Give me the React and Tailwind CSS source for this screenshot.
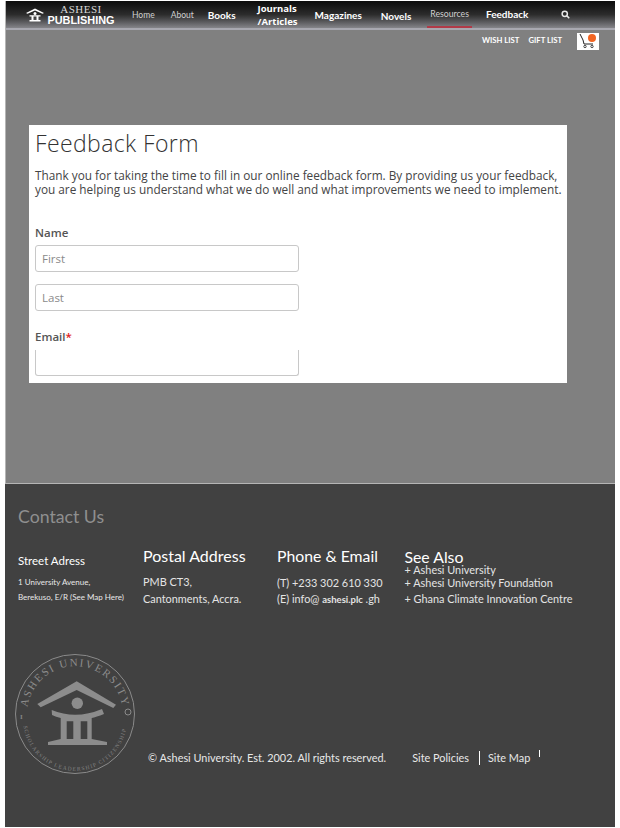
const NAV_ITEMS = [
  { label: 'Home', className: 'ml-[17px] text-[8.5px] text-[#d0d0d0] font-normal pt-[1px]' },
  { label: 'About', className: 'ml-[16px] text-[8.5px] text-[#d0d0d0] font-normal pt-[1px]' },
  { label: 'Books', className: 'ml-[14px] text-[10px] text-white font-bold pt-[1px]' },
  { label: 'Magazines', className: 'ml-[16px] text-[10px] text-white font-bold pt-[2px]' },
  { label: 'Novels', className: 'ml-[19px] text-[10px] text-white font-bold pt-[3px]' },
]

const Logo = () => (
  <svg width="20" height="16" viewBox="0 0 20 16" fill="none" className="ml-[19px] shrink-0">
    <path d="M1 6 L10 1.5 L19 6 L17.5 6.8 L10 3.4 L2.5 6.8 Z" fill="#fff" />
    <circle cx="10" cy="6.4" r="1.5" fill="#fff" />
    <path d="M4.5 8.2h11v1.2h-11z M6.5 9.4h2v3.6h-2z M11.5 9.4h2v3.6h-2z M4.5 13h11v1.4h-11z" fill="#fff" />
  </svg>
)

const Seal = () => (
  <svg width="122" height="122" viewBox="0 0 122 122" className="shrink-0">
    <defs>
      <path id="sealTop" d="M 13.5 53.3 A 48 48 0 0 1 108.5 53.3" />
      <path id="sealBottom" d="M 9.5 72 A 52 52 0 0 0 112.5 72" />
    </defs>
    <circle cx="61" cy="60" r="59.5" fill="none" stroke="#8a8a8a" strokeWidth="1" />
    <text fontSize="11" fill="#8d8d8d" fontFamily="'Liberation Serif', serif">
      <textPath href="#sealTop" textLength="135" lengthAdjust="spacing">ASHESI UNIVERSITY</textPath>
    </text>
    <text fontSize="5.5" fill="#858585" fontFamily="'Liberation Serif', serif">
      <textPath href="#sealBottom" textLength="145" lengthAdjust="spacing">SCHOLARSHIP LEADERSHIP CITIZENSHIP</textPath>
    </text>
    <text x="6" y="65" fontSize="7" fontWeight="700" fill="#858585" fontFamily="'Liberation Serif', serif">I</text>
    <circle cx="114" cy="58" r="3" fill="none" stroke="#8a8a8a" />
    <path d="M 23.3 50 L 62.7 27.3 L 102 50.7 L 99.3 54 L 62.7 36 L 26.7 53.3 Z" fill="#8c8c8c" />
    <circle cx="63.3" cy="49.3" r="5.7" fill="#8c8c8c" />
    <path d="M 37.7 56 Q 62 66 88 55 L 90 60 Q 82 63 77.7 64 L 46.7 64 Q 42 63 38 61 Z" fill="#8c8c8c" />
    <path
      fillRule="evenodd"
      d="M 46.7 63 H 77.7 V 85 L 93 88 V 91 H 34 V 88 L 46.7 85 Z M 52.7 67.3 V 85 H 59.3 V 67.3 Z M 66.7 67.3 V 85 H 73.3 V 67.3 Z"
      fill="#8c8c8c"
    />
  </svg>
)

const App = () => {
  return (
    <div className="w-[620px] h-[828px] bg-white px-[5px] pt-[1px] font-['Lato',sans-serif]">
      <main className="h-[482px] bg-[#808080] border-l border-[#b5b5b5]">
        <header className="h-[29px] flex items-center border-b-2 border-[#a8a8b0] bg-gradient-to-b from-[#0c0c0c] via-[#2c2c2c] to-[#85858a]">
          <Logo />
          <div className="ml-[2px] w-[68px] flex flex-col items-center leading-none">
            <span className="text-[11px] text-[#d8d8d8] tracking-[0.5px] font-['Liberation_Serif',serif]">ASHESI</span>
            <span className="text-[10.9px] text-white font-bold font-['Liberation_Sans',sans-serif]">PUBLISHING</span>
          </div>
          {NAV_ITEMS.slice(0, 3).map((item) => (
            <a key={item.label} className={item.className}>{item.label}</a>
          ))}
          <a className="ml-[22px] w-[41px] text-[9.5px] leading-[13px] text-white font-bold font-['Open_Sans',sans-serif]">Journals<br />/Articles</a>
          {NAV_ITEMS.slice(3).map((item) => (
            <a key={item.label} className={item.className}>{item.label}</a>
          ))}
          <a className="ml-[16px] h-full px-[3px] flex items-center text-[8.7px] text-[#d0d0d0] border-b-2 border-[#b23a48]">Resources</a>
          <a className="ml-[14px] text-[10px] text-white font-bold">Feedback</a>
          <svg width="9" height="9" viewBox="0 0 24 24" fill="none" stroke="#e8e8e8" strokeWidth="4" className="ml-[33px]">
            <circle cx="10" cy="10" r="7" />
            <path d="M15 15l7 7" />
          </svg>
        </header>
        <div className="h-[20px] flex items-center justify-end">
          <a className="pt-[2px] text-[7.7px] font-bold text-white">WISH LIST</a>
          <a className="pt-[2px] ml-[9px] text-[7.7px] font-bold text-white">GIFT LIST</a>
          <div className="ml-[15px] mr-[16px] mt-[2px] w-[22px] h-[17px] bg-white flex items-center justify-center">
            <svg width="20" height="16" viewBox="0 0 20 16" fill="none">
              <path d="M2 1l3 6 1 4h9" stroke="#222" strokeWidth="1" />
              <circle cx="7" cy="13.5" r="1.2" stroke="#222" strokeWidth="0.8" />
              <circle cx="14" cy="13.5" r="1.2" stroke="#222" strokeWidth="0.8" />
              <circle cx="14" cy="5" r="4" fill="#f26522" />
            </svg>
          </div>
        </div>
        <section className="mt-[75px] ml-[23px] w-[538px] h-[258px] bg-white px-[6px] pt-[3px] font-['Open_Sans',sans-serif] text-[#444]">
          <h1 className="text-[23px] leading-[30px] font-light tracking-[0.4px] text-[#333]">Feedback Form</h1>
          <p className="mt-[10px] text-[11.8px] leading-[14px] text-[#444] whitespace-nowrap">
            Thank you for taking the time to fill in our online feedback form. By providing us your feedback,<br />
            you are helping us understand what we do well and what improvements we need to implement.
          </p>
          <label className="block mt-[29px] text-[11.5px] leading-[15px] font-semibold text-[#555]">Name</label>
          <input placeholder="First" className="block mt-[5px] w-[264px] h-[27px] px-[6px] text-[11.5px] border border-[#c8c8c8] rounded-[3px] placeholder:text-[#8a8a8a]" />
          <input placeholder="Last" className="block mt-[12px] w-[264px] h-[27px] px-[6px] text-[11.5px] border border-[#c8c8c8] rounded-[3px] placeholder:text-[#8a8a8a]" />
          <label className="block mt-[18px] text-[11.5px] leading-[15px] font-semibold text-[#555]">Email<span className="text-[#e02020]">*</span></label>
          <input className="block mt-[6px] w-[264px] h-[26px] px-[6px] text-[11.5px] border border-t-0 border-[#c8c8c8] rounded-b-[3px]" />
        </section>
      </main>
      <footer className="h-[344px] bg-[#414141] border-t border-[#b5b5b5] pt-[20px] text-white">
        <h2 className="ml-[13px] text-[17.7px] leading-[26px] text-[#8f8f8f]">Contact Us</h2>
        <div className="mt-[16px] flex items-start h-[62px]">
          <div className="ml-[13px] w-[125px] pt-[7px]">
            <h3 className="text-[11.5px] leading-[16px]">Street Adress</h3>
            <p className="mt-[6px] text-[8px] leading-[15px] text-[#e8e8e8] whitespace-nowrap">1 University Avenue,<br />Berekuso, E/R (See Map Here)</p>
          </div>
          <div className="w-[134px]">
            <h3 className="text-[16px] leading-[20px]">Postal Address</h3>
            <p className="mt-[7px] text-[10.9px] leading-[17px] text-[#e4e4e4]">PMB CT3,<br />Cantonments, Accra.</p>
          </div>
          <div className="w-[127.5px]">
            <h3 className="text-[15.8px] leading-[20px]">Phone &amp; Email</h3>
            <p className="mt-[9px] text-[10.9px] leading-[16px] text-[#e4e4e4] whitespace-nowrap">(T) +233 302 610 330<br />(E) info@ <b className="text-[9.5px]">ashesi.plc</b> .gh</p>
          </div>
          <div>
            <h3 className="text-[15.8px] leading-[15px] pt-[3px]">See Also</h3>
            <ul className="text-[10.9px] text-[#e4e4e4] whitespace-nowrap">
              <li className="leading-[12px]">+ Ashesi University</li>
              <li className="leading-[14px]">+ Ashesi University Foundation</li>
              <li className="leading-[14px] mt-[2px]">+ Ghana Climate Innovation Centre</li>
            </ul>
          </div>
        </div>
        <div className="mt-[46px] ml-[9px] flex items-start">
          <Seal />
          <p className="mt-[97px] ml-[12px] text-[10.9px] leading-[14px] text-[#e8e8e8] whitespace-nowrap">© Ashesi University. Est. 2002.  All rights reserved.</p>
          <a className="mt-[97px] ml-[26px] text-[10.9px] leading-[14px] text-[#e8e8e8]">Site Policies</a>
          <a className="mt-[97px] ml-[10px] pl-[8px] border-l border-white text-[10.9px] leading-[14px] text-[#e8e8e8]">Site Map</a>
          <span className="mt-[96px] ml-[9px] w-px h-[7px] bg-white" />
        </div>
      </footer>
    </div>
  )
}

export default App
